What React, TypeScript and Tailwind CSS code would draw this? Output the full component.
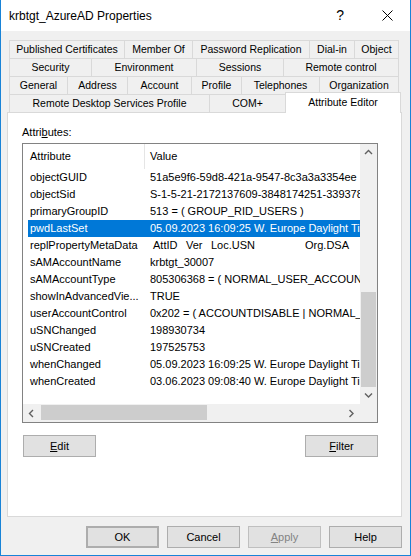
import React from "react"

type Tab = { label: string; w: string }

const tabRows: Tab[][] = [
  [
    { label: "Published Certificates", w: "w-[116px]" },
    { label: "Member Of", w: "w-[68px]" },
    { label: "Password Replication", w: "w-[117px]" },
    { label: "Dial-in", w: "w-[45px]" },
    { label: "Object", w: "w-[44px]" },
  ],
  [
    { label: "Security", w: "w-[83px]" },
    { label: "Environment", w: "w-[105px]" },
    { label: "Sessions", w: "w-[87px]" },
    { label: "Remote control", w: "w-[115px]" },
  ],
  [
    { label: "General", w: "w-[59px]" },
    { label: "Address", w: "w-[60px]" },
    { label: "Account", w: "w-[64px]" },
    { label: "Profile", w: "w-[50px]" },
    { label: "Telephones", w: "w-[78px]" },
    { label: "Organization", w: "w-[79px]" },
  ],
]

const rows: [string, string][] = [
  ["objectGUID", "51a5e9f6-59d8-421a-9547-8c3a3a3354ee"],
  ["objectSid", "S-1-5-21-2172137609-3848174251-3393784"],
  ["primaryGroupID", "513 = ( GROUP_RID_USERS )"],
  ["pwdLastSet", "05.09.2023 16:09:25 W. Europe Daylight Time"],
  ["replPropertyMetaData", ""],
  ["sAMAccountName", "krbtgt_30007"],
  ["sAMAccountType", "805306368 = ( NORMAL_USER_ACCOUNT )"],
  ["showInAdvancedVie...", "TRUE"],
  ["userAccountControl", "0x202 = ( ACCOUNTDISABLE | NORMAL_ACCOUNT )"],
  ["uSNChanged", "198930734"],
  ["uSNCreated", "197525753"],
  ["whenChanged", "05.09.2023 16:09:25 W. Europe Daylight Time"],
  ["whenCreated", "03.06.2023 09:08:40 W. Europe Daylight Time"],
]

const Chevron = ({ dir }: { dir: "up" | "down" | "left" | "right" }) => {
  const d = {
    up: "M1 5 L4.5 1.5 L8 5",
    down: "M1 1.5 L4.5 5 L8 1.5",
    left: "M5 1 L1.5 4.5 L5 8",
    right: "M1.5 1 L5 4.5 L1.5 8",
  }[dir]
  const vert = dir === "up" || dir === "down"
  return (
    <svg width={vert ? 9 : 7} height={vert ? 7 : 9} viewBox={vert ? "0 0 9 7" : "0 0 7 9"}>
      <path d={d} fill="none" stroke="#606060" strokeWidth="1.4" />
    </svg>
  )
}

const Btn = ({ children, className = "" }: { children: React.ReactNode; className?: string }) => (
  <div className={`flex items-center justify-center w-[73px] h-[22px] border border-[#adadad] bg-[#e1e1e1] ${className}`}>
    {children}
  </div>
)

export default function App() {
  return (
    <div className="w-[411px] h-[556px] bg-[#f0f0f0] border-x border-b border-[#1883d7] flex flex-col overflow-hidden text-[11px] text-black font-['Liberation_Sans',Arial,sans-serif]">
      {/* title bar */}
      <div className="h-[31px] bg-white flex items-center shrink-0">
        <div className="pl-[8px] text-[12px] flex-1">krbtgt_AzureAD Properties</div>
        <div className="text-[14px] mr-[38px]">?</div>
        <svg width="11" height="11" viewBox="0 0 11 11" className="mr-[17px]">
          <path d="M0.5 0.5 L10.5 10.5 M10.5 0.5 L0.5 10.5" stroke="#000" strokeWidth="1" />
        </svg>
      </div>

      <div className="pl-[6px] pt-[9px]">
        {/* tabs */}
        <div className="ml-[2px] text-[10.5px]">
          {tabRows.map((row, i) => (
            <div key={i} className="flex h-[18px]">
              {row.map((t, j) => (
                <div
                  key={t.label}
                  className={`${t.w} flex items-center justify-center pt-[1px] border-t border-r border-[#d9d9d9] whitespace-nowrap ${j === 0 ? "border-l" : ""}`}
                >
                  {t.label}
                </div>
              ))}
            </div>
          ))}
          <div className="flex h-[18px]">
            <div className="w-[201px] flex items-center justify-center pt-[1px] border-t border-r border-l border-[#d9d9d9]">
              Remote Desktop Services Profile
            </div>
            <div className="w-[75px] flex items-center justify-center pt-[1px] border-t border-[#d9d9d9]">COM+</div>
            <div className="relative z-10 w-[116px] h-[21px] -mt-[2px] bg-white border-x border-t border-[#d9d9d9] flex justify-center pt-[2px]">
              Attribute Editor
            </div>
          </div>
        </div>

        {/* panel */}
        <div className="w-[395px] h-[405px] bg-white border border-[#d9d9d9]">
          <div className="ml-[14px] mt-[12px] h-[14px] leading-[14px]">
            Attri<span className="underline">b</span>utes:
          </div>
          <div className="ml-[14px] mt-[4px] w-[356px] h-[280px] border border-[#828282] flex flex-col">
            <div className="flex h-[260px]">
              <div className="w-[337px] overflow-hidden">
                <div className="h-[25px] flex items-center">
                  <div className="w-[121px] pl-[7px]">Attribute</div>
                  <div className="w-px h-full bg-[#e5e5e5]" />
                  <div className="pl-[5px]">Value</div>
                </div>
                {rows.map(([a, v]) => {
                  const sel = a === "pwdLastSet"
                  return (
                    <div
                      key={a}
                      className={`ml-[5px] h-[17px] flex items-center whitespace-nowrap ${sel ? "bg-[#0078d7] text-white" : ""}`}
                    >
                      <div className="w-[122px] pl-[2px] shrink-0">{a}</div>
                      {a === "replPropertyMetaData" ? (
                        <div className="flex pl-[3px]">
                          <span className="w-[33px]">AttID</span>
                          <span className="w-[25px]">Ver</span>
                          <span className="w-[94px]">Loc.USN</span>
                          <span>Org.DSA</span>
                        </div>
                      ) : (
                        <div>{v}</div>
                      )}
                    </div>
                  )
                })}
              </div>
              <div className="w-[17px] bg-[#f0f0f0] flex flex-col">
                <div className="h-[17px] flex items-center justify-center">
                  <Chevron dir="up" />
                </div>
                <div className="flex-1 flex flex-col justify-end">
                  <div className="h-[95px] mx-[1px] bg-[#cdcdcd]" />
                </div>
                <div className="h-[17px] flex items-center justify-center">
                  <Chevron dir="down" />
                </div>
              </div>
            </div>
            <div className="flex h-[18px] bg-[#f0f0f0]">
              <div className="w-[17px] flex items-center justify-center">
                <Chevron dir="left" />
              </div>
              <div className="w-[303px] pt-[1px]">
                <div className="ml-[1px] w-[166px] h-[15px] bg-[#cdcdcd]" />
              </div>
              <div className="w-[17px] flex items-center justify-center">
                <Chevron dir="right" />
              </div>
              <div className="w-[17px]" />
            </div>
          </div>
          <div className="ml-[15px] mt-[12px] w-[355px] flex justify-between">
            <Btn>
              <span className="underline">E</span>dit
            </Btn>
            <Btn>
              <span className="underline">F</span>ilter
            </Btn>
          </div>
        </div>

        {/* dialog buttons */}
        <div className="w-[395px] mt-[9px] flex justify-end gap-[8px]">
          <Btn className="border-2 border-[#0078d7]">OK</Btn>
          <Btn>Cancel</Btn>
          <Btn className="bg-[#cccccc] border-[#bfbfbf] text-[#838383]">
            <span className="underline">A</span>pply
          </Btn>
          <Btn>Help</Btn>
        </div>
      </div>
    </div>
  )
}
